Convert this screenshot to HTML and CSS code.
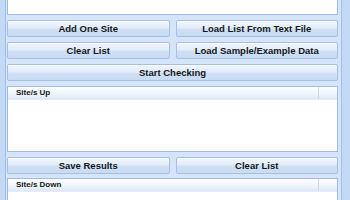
FILE: index.html
```html
<!DOCTYPE html>
<html lang="en">
<head>
    <meta charset="UTF-8">
    <title>Website Checker</title>
    <link rel="stylesheet" href="styles.css">
</head>
<body>
    <div class="window">
        <div class="frame-left"></div>
        <div class="panel">
            <div class="input-box"></div>

            <div class="btn-row">
                <button class="btn">Add One Site</button>
                <button class="btn">Load List From Text File</button>
            </div>
            <div class="btn-row">
                <button class="btn">Clear List</button>
                <button class="btn">Load Sample/Example Data</button>
            </div>
            <button class="btn wide">Start Checking</button>

            <div class="list up">
                <div class="list-head">
                    <div class="col main">Site/s Up</div>
                    <div class="col end"></div>
                </div>
            </div>

            <div class="btn-row tight">
                <button class="btn">Save Results</button>
                <button class="btn">Clear List</button>
            </div>

            <div class="list down">
                <div class="list-head">
                    <div class="col main">Site/s Down</div>
                    <div class="col end"></div>
                </div>
            </div>
        </div>
        <div class="frame-right"></div>
    </div>
</body>
</html>
```

FILE: styles.css
```css
body {
    margin: 0;
    width: 350px;
    height: 200px;
    overflow: hidden;
    font-family: Tahoma, "Liberation Sans", Arial, sans-serif;
    background: #d5e4f8;
}

.window {
    display: flex;
    height: 200px;
}

.frame-left {
    width: 5px;
    background: #c4d9f6;
    border-right: 1px solid #a2bfe7;
}

.frame-right {
    width: 8px;
    background: #c4d9f6;
    border-left: 1px solid #a2bfe7;
}

.panel {
    flex: 1;
    padding: 0 3px 0 1px;
    background: #d5e4f8;
    display: flex;
    flex-direction: column;
}

.input-box {
    height: 14px;
    flex-shrink: 0;
    background: #fff;
    border: 1px solid #9fbde6;
    border-top: none;
    margin-bottom: 5px;
}

.btn-row {
    display: flex;
    gap: 6px;
    margin-bottom: 5px;
}

.btn-row.tight {
    margin-bottom: 4px;
}

.btn-row .btn {
    flex: 1;
}

.btn {
    height: 17px;
    flex-shrink: 0;
    padding: 0;
    border: 1px solid #a5c0e6;
    border-radius: 2px;
    background: linear-gradient(to bottom, #f1f6fd 0%, #e2ecfa 45%, #d0e0f5 55%, #c8dbf3 100%);
    font-family: "Liberation Sans", Arial, sans-serif;
    font-size: 9.5px;
    font-weight: bold;
    color: #141820;
    box-shadow: inset 0 1px 0 rgba(255, 255, 255, 0.7);
}

.btn.wide {
    width: 100%;
    margin-bottom: 5px;
}

.list {
    background: #fff;
    border: 1px solid #9fbde6;
    flex-shrink: 0;
}

.list.up {
    height: 64px;
    margin-bottom: 5px;
}

.list.down {
    flex: 1;
    border-bottom: none;
}

.list-head {
    display: flex;
    height: 12px;
    background: linear-gradient(to bottom, #ffffff 0%, #f2f7fd 45%, #dce8f8 100%);
    border-bottom: 1px solid #e3ebf7;
}

.col {
    font-family: "Liberation Sans", Arial, sans-serif;
    font-size: 8px;
    font-weight: bold;
    color: #141820;
    line-height: 12px;
}

.col.main {
    flex: 1;
    padding-left: 8px;
    border-right: 1px solid #c9d8ec;
}

.col.end {
    width: 18px;
}
```
